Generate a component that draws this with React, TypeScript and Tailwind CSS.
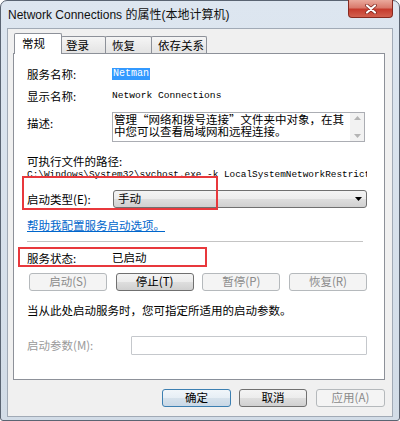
import React from "react";

export default function App() {
  const btn =
    "h-[18px] rounded-[3px] border text-[11.5px] leading-none flex items-center justify-center";
  const btnOn =
    "border-[#707070] bg-[linear-gradient(to_bottom,#f4f4f4_0%,#ececec_50%,#dedede_51%,#d0d0d0_100%)] text-black";
  const btnOff = "border-[#b5b9bc] bg-[#f4f4f4] text-[#8a8a8a]";
  const label = "w-[85px] shrink-0 text-[11.5px] leading-[16px] text-black";
  const mono = "font-['Liberation_Mono',monospace]";

  return (
    <div className="relative w-[400px] h-[421px] overflow-hidden bg-white font-['Noto_Sans_CJK_SC',sans-serif]">
      <div className="w-[400px] h-[421px] border border-[#5a6472] rounded-t-[7px] rounded-b-[3px] bg-[linear-gradient(to_bottom,#dde6f0,#d2dce7)] flex flex-col">
        {/* title bar */}
        <div className="h-[27px] flex items-start">
          <div className="flex-1 pl-[7px] h-[27px] flex items-center text-[12px] text-[#111] font-['Liberation_Sans','Noto_Sans_CJK_SC',sans-serif]">
            Network Connections 的属性(本地计算机)
          </div>
          <div className="-mt-px mr-[6px] w-[45px] h-[18px] rounded-b-[4px] border border-t-0 border-[#87291f] bg-[linear-gradient(to_bottom,#eaa99c_0%,#d97a6c_45%,#c63b2d_55%,#d2604f_100%)] flex items-center justify-center">
            <svg width="12" height="10" viewBox="0 0 12 10">
              <path d="M2 1.5 L10 8.5 M10 1.5 L2 8.5" stroke="#7a2018" strokeWidth="3.6" strokeLinecap="round" />
              <path d="M2 1.5 L10 8.5 M10 1.5 L2 8.5" stroke="#ffffff" strokeWidth="2.2" strokeLinecap="round" />
            </svg>
          </div>
        </div>

        {/* client area */}
        <div className="mx-[6px] h-[389px] border border-[#a1aab6] bg-[#f0f0f0] px-[5px] pt-[4px] flex flex-col">
          {/* tabs */}
          <div className="h-[21px] -mb-px pl-px flex items-end text-[11.5px] leading-none">
            <div className="relative z-10 w-[48px] h-[21px] border border-b-0 border-[#8d9199] bg-white pl-[7px] flex items-center rounded-t-[2px]">
              常规
            </div>
            <div className="-ml-px w-[45px] h-[18px] border border-b-0 border-[#8d9199] bg-[linear-gradient(to_bottom,#f5f5f5,#e2e2e2)] pl-[4px] flex items-center rounded-t-[2px]">
              登录
            </div>
            <div className="-ml-px w-[47px] h-[18px] border border-b-0 border-[#8d9199] bg-[linear-gradient(to_bottom,#f5f5f5,#e2e2e2)] pl-[6px] flex items-center rounded-t-[2px]">
              恢复
            </div>
            <div className="-ml-px w-[56px] h-[18px] border border-b-0 border-[#8d9199] bg-[linear-gradient(to_bottom,#f5f5f5,#e2e2e2)] pl-[6px] flex items-center rounded-t-[2px]">
              依存关系
            </div>
          </div>

          {/* panel */}
          <div className="w-[372px] h-[327px] border border-[#8d9199] bg-white pl-[13px] pr-[17px] flex flex-col">
            <div className="mt-[12px] h-[16px] flex items-center">
              <div className={label}>服务名称:</div>
              <span className={`${mono} text-[10px] leading-[12px] h-[12px] px-px bg-[#3399ff] text-white`}>Netman</span>
            </div>
            <div className="mt-[6px] h-[16px] flex items-center">
              <div className={label}>显示名称:</div>
              <span className={`${mono} text-[9.6px] text-black`}>Network Connections</span>
            </div>
            <div className="mt-[8px] h-[30px] flex items-start">
              <div className={`${label} pt-[3px]`}>描述:</div>
              <div className="w-[253px] h-[30px] border border-[#abadb3] flex">
                <div className="flex-1 pl-px pt-[1px] text-[11.5px] leading-[11.5px] text-black">
                  管理“网络和拨号连接”文件夹中对象，在其
                  <br />
                  中您可以查看局域网和远程连接。
                </div>
                <div className="w-[14px] bg-[#f2f2f2] flex flex-col items-center justify-between py-[3px]">
                  <svg width="7" height="4" viewBox="0 0 7 4"><path d="M0 4 L3.5 0 L7 4 Z" fill="#b4b4b4" /></svg>
                  <svg width="7" height="4" viewBox="0 0 7 4"><path d="M0 0 L3.5 4 L7 0 Z" fill="#b4b4b4" /></svg>
                </div>
              </div>
            </div>
            <div className="mt-[13px] h-[14px] flex items-center text-[11.5px] leading-none text-black">
              可执行文件的路径:
            </div>
            <div className={`h-[12px] w-[340px] overflow-hidden whitespace-nowrap ${mono} text-[9.4px] leading-[12px] text-black`}>
              C:\Windows\System32\svchost.exe -k LocalSystemNetworkRestricted
            </div>
            <div className="mt-[9px] h-[18px] flex items-center">
              <div className={label}>启动类型(E):</div>
              <div className="ml-px flex-1 h-[18px] rounded-[3px] border border-[#707070] bg-[linear-gradient(to_bottom,#f4f4f4_0%,#ececec_50%,#dedede_51%,#d0d0d0_100%)] flex items-center pl-[4px] pr-[4px] text-[11.5px] leading-none text-black">
                <span className="flex-1">手动</span>
                <svg width="7" height="4" viewBox="0 0 7 4"><path d="M0 0 L3.5 4 L7 0 Z" fill="#000" /></svg>
              </div>
            </div>
            <div className="mt-[10px] h-[16px] flex items-center text-[11.5px] leading-none text-[#0066cc] underline">
              帮助我配置服务启动选项。
            </div>
            <div className="mt-[7px] h-px w-[336px] bg-[#c4c4c4]" />
            <div className="mt-[8px] h-[16px] flex items-center">
              <div className={label}>服务状态:</div>
              <span className="text-[11.5px] leading-none text-black">已启动</span>
            </div>
            <div className="mt-[7px] h-[18px] pl-[2px] flex justify-between">
              <div className={`${btn} ${btnOff} w-[78px]`}>启动(S)</div>
              <div className={`${btn} ${btnOn} w-[78px]`}>停止(T)</div>
              <div className={`${btn} ${btnOff} w-[78px]`}>暂停(P)</div>
              <div className={`${btn} ${btnOff} w-[78px]`}>恢复(R)</div>
            </div>
            <div className="mt-[12px] h-[16px] flex items-center text-[11.5px] leading-none text-black">
              当从此处启动服务时，您可指定所适用的启动参数。
            </div>
            <div className="mt-[17px] h-[19px] flex items-center">
              <div className="w-[104px] shrink-0 text-[11.5px] leading-none text-[#9a9a9a]">启动参数(M):</div>
              <div className="flex-1 h-[19px] border border-[#c5c8cc] rounded-[1px] bg-white" />
            </div>
          </div>

          {/* bottom buttons */}
          <div className="mt-[9px] w-[372px] h-[18px] flex justify-end">
            <div className={`${btn} w-[69px] border-[#3c7fb1] bg-[linear-gradient(to_bottom,#f1f6fa_0%,#e6eef5_50%,#d6e2ec_51%,#c9d8e6_100%)] text-black`}>确定</div>
            <div className={`${btn} ${btnOn} ml-[8px] w-[68px]`}>取消</div>
            <div className={`${btn} ${btnOff} ml-[9px] w-[69px]`}>应用(A)</div>
          </div>
        </div>
      </div>

      {/* red annotation boxes */}
      <div className="absolute left-[22px] top-[176px] w-[196px] h-[34px] border-2 border-[#e8383c]" />
      <div className="absolute left-[18px] top-[247px] w-[189px] h-[20px] border-2 border-[#e8383c]" />
    </div>
  );
}
